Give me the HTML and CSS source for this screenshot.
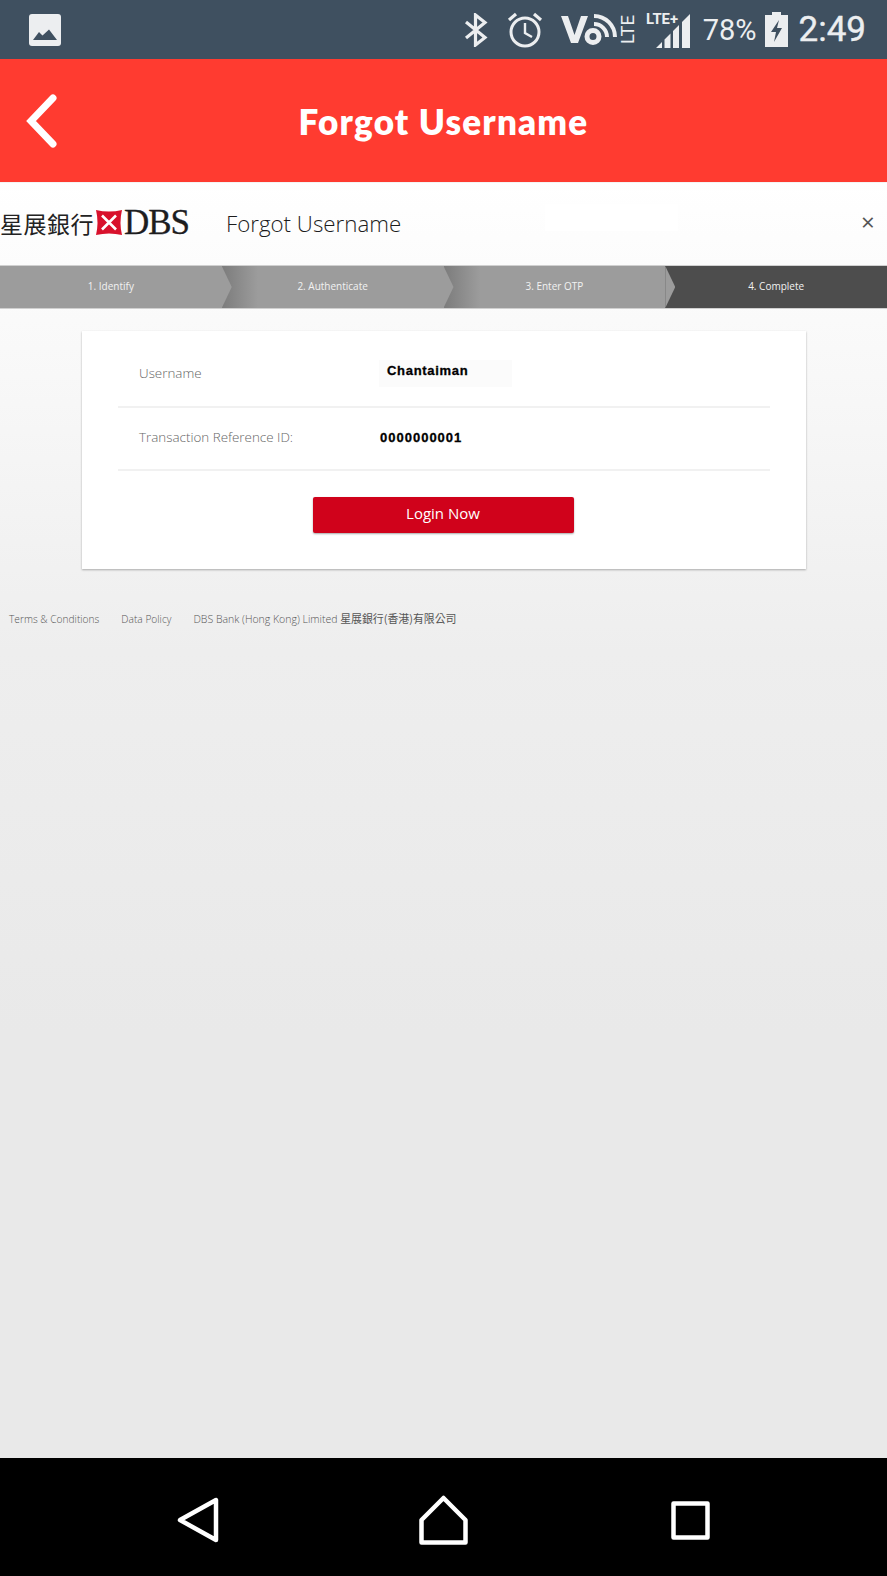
FILE: index.html
```html
<!DOCTYPE html>
<html lang="en">
<head>
    <meta charset="UTF-8">
    <meta name="viewport" content="width=device-width, initial-scale=1.0">
    <title>Forgot Username</title>
    <link rel="stylesheet" href="styles.css">
</head>
<body>

    <div class="status-bar">
        <svg class="status-photo" width="32" height="32" viewBox="0 0 32 32">
            <rect width="32" height="32" rx="3" fill="#eceef0"/>
            <path d="M4 26 L10 18 L13.5 21.5 L20 15.5 L28 26 Z" fill="#3f5060"/>
        </svg>
        <div class="status-right">
            <svg width="24" height="34" viewBox="0 0 24 34" fill="none" stroke="#eceef0" stroke-width="3.2">
                <path d="M2 9 L21 24.500 L11.500 32 L11.500 2 L21 9.500 L2 25"/>
            </svg>
            <svg class="status-alarm" width="36" height="36" viewBox="0 0 36 36" fill="none" stroke="#eceef0" stroke-width="3">
                <circle cx="18" cy="20" r="14"/>
                <path d="M18 11 L18 21 L25 25" stroke-width="2.4"/>
                <path d="M2 8 L9 2 M34 8 L27 2" stroke-width="3.2"/>
            </svg>
            <svg class="status-volte" width="80" height="40" viewBox="0 -3 80 40">
                <path d="M0 3 L7 3 L13.500 22 L20 3 L27 3 L17 30 L10 30 Z" fill="#eceef0"/>
                <circle cx="32" cy="23.500" r="6" fill="none" stroke="#eceef0" stroke-width="5"/>
                <path d="M33 11 A13 13 0 0 1 46 24 M33 3 A21 21 0 0 1 54 24" fill="none" stroke="#eceef0" stroke-width="4"/>
                <text class="status-lte-side" transform="translate(73 31) rotate(-90)" textLength="29" lengthAdjust="spacingAndGlyphs">LTE</text>
            </svg>
            <svg class="status-signal" width="46" height="44" viewBox="0 -8 46 44">
                <path d="M10 36 L16 30 L16 36 Z M18.500 36 L18.500 27.500 L24.500 21.500 L24.500 36 Z M27 36 L27 19 L33 13 L33 36 Z M36 36 L36 10 L44 2 L44 36 Z" fill="#eceef0"/>
                <text class="status-lte-top" x="0" y="12" textLength="32" lengthAdjust="spacingAndGlyphs">LTE+</text>
            </svg>
            <span class="status-pct">78%</span>
            <svg class="status-battery" width="23" height="35" viewBox="0 0 23 35">
                <path d="M7 0 H16 V3 H23 V35 H0 V3 H7 Z" fill="#eceef0"/>
                <path d="M14 8 L6 20 L11 20 L9 30 L17 16 L12 16 Z" fill="#3f5060"/>
            </svg>
            <span class="status-time">2:49</span>
        </div>
    </div>

    <div class="app-header">
        <svg width="32" height="54" viewBox="0 0 32 54" fill="none" stroke="#fff" stroke-width="7" stroke-linecap="round" stroke-linejoin="miter">
            <path d="M27 4 L5 27 L27 50"/>
        </svg>
        <h1 class="app-title">Forgot Username</h1>
    </div>

    <div class="page">
        <div class="top-row">
            <div class="logo">
                <span class="logo-cn">星展銀行</span>
                <svg class="logo-mark" width="28" height="27" viewBox="0 0 28 27">
                    <path d="M1 1 Q14 4 27 1 Q24 13.500 27 26 Q14 23 1 26 Q4 13.500 1 1 Z" fill="#d8112c"/>
                    <path d="M7 6.500 L21 20.500 M21 6.500 L7 20.500" stroke="#fff" stroke-width="2.600"/>
                </svg>
                <span class="logo-en">DBS</span>
            </div>
            <div class="top-title">Forgot Username</div>
            <div class="top-blank"></div>
            <div class="top-close">×</div>
        </div>

        <div class="steps">
            <div class="step">1. Identify</div>
            <div class="step step-shade">2. Authenticate</div>
            <div class="step step-shade">3. Enter OTP</div>
            <div class="step step-active">4. Complete</div>
        </div>

        <div class="card">
            <div class="card-row card-row-name">
                <div class="card-label">Username</div>
                <div class="card-value card-value-name">Chantaiman</div>
            </div>
            <div class="card-row card-row-ref">
                <div class="card-label">Transaction Reference ID:</div>
                <div class="card-value card-value-ref">0000000001</div>
            </div>
            <div class="card-action">
                <button class="login-button">Login Now</button>
            </div>
        </div>

        <div class="footer-links">
            <span>Terms &amp; Conditions</span>
            <span>Data Policy</span>
            <span class="footer-bank">DBS Bank (Hong Kong) Limited <span class="footer-cn">星展銀行(香港)有限公司</span></span>
        </div>
    </div>

    <div class="nav-bar">
        <svg width="42" height="46" viewBox="0 0 42 46" fill="none" stroke="#fff" stroke-width="4.500" stroke-linejoin="round">
            <path d="M3 23 L39 3 L39 43 Z"/>
        </svg>
        <svg class="nav-home" width="49" height="50" viewBox="0 0 49 50" fill="none" stroke="#fff" stroke-width="4.500" stroke-linejoin="round">
            <path d="M24.500 3 L2.500 25 L2.500 47.500 L46.500 47.500 L46.500 25 Z"/>
        </svg>
        <svg class="nav-square" width="39" height="39" viewBox="0 0 39 39" fill="none" stroke="#fff" stroke-width="4.500" stroke-linejoin="round">
            <rect x="2.500" y="2.500" width="34" height="34"/>
        </svg>
    </div>

</body>
</html>
```

FILE: styles.css
```css
* {
    box-sizing: border-box;
}

body {
    margin: 0;
    height: 1576px;
    overflow: hidden;
    display: flex;
    flex-direction: column;
    font-family: "Open Sans", Arial, sans-serif;
    background: #e9e9e9;
}

/* Status bar */
.status-bar {
    height: 59px;
    background: #3f5060;
    display: flex;
    align-items: center;
    justify-content: space-between;
    padding: 0 21px 0 29px;
    color: #eceef0;
}

.status-right {
    display: flex;
    align-items: center;
}

.status-alarm {
    margin-left: 19px;
}

.status-volte {
    margin-left: 18px;
}

.status-lte-side {
    font: 400 19px Roboto, sans-serif;
    fill: #eceef0;
}

.status-signal {
    margin-left: 5px;
    margin-bottom: 8px;
}

.status-lte-top {
    font: 700 15px Roboto, sans-serif;
    fill: #eceef0;
}

.status-pct {
    font: 400 29px Roboto, sans-serif;
    margin-left: 11px;
}

.status-battery {
    margin-left: 8px;
}

.status-time {
    font: 400 35px Roboto, sans-serif;
    -webkit-text-stroke: 0.4px #eceef0;
    margin-left: 11px;
}

/* Red header */
.app-header {
    height: 123px;
    background: #ff3b30;
    display: flex;
    align-items: center;
    padding-left: 26px;
}

.app-title {
    flex: 1;
    margin: 0 0 0 -58px;
    text-align: center;
    color: white;
    font: 800 35px Lato, sans-serif;
    letter-spacing: 1.200px;
}

/* Page */
.page {
    flex: 1;
    background: linear-gradient(#ffffff 0, #eeeeee 470px, #e9e9e9 850px);
}

.top-row {
    height: 83px;
    display: flex;
    align-items: center;
    border-top: 1px solid #f4f4f4;
}

.logo {
    width: 226px;
    display: flex;
    align-items: center;
    padding-bottom: 3px;
}

.logo-cn {
    font: 400 23px "Noto Sans CJK TC", sans-serif;
    color: #222;
    width: 95px;
    white-space: nowrap;
    letter-spacing: 0.5px;
}

.logo-en {
    font: 400 35px "Liberation Serif", serif;
    -webkit-text-stroke: 0.3px #1d1d1f;
    color: #1d1d1f;
    margin-left: 1px;
    letter-spacing: -1px;
}

.top-title {
    width: 319px;
    padding-bottom: 2px;
    font-size: 22.300px;
    font-weight: 300;
    color: #1c1c1c;
}

.top-blank {
    width: 133px;
    height: 27px;
    margin-top: -14px;
    background: white;
}

.top-close {
    margin-left: 183px;
    margin-top: -6px;
    font-size: 24px;
    color: #555;
}

.steps {
    height: 44px;
    display: flex;
    border-top: 1px solid #d0d0d0;
    border-bottom: 1px solid #d0d0d0;
}

.step {
    position: relative;
    flex: 1;
    display: flex;
    align-items: center;
    justify-content: center;
    padding-bottom: 3px;
    background: #9c9c9c;
    color: #f2f2f2;
    font-size: 10px;
}

.step::after {
    content: "";
    position: absolute;
    top: 0;
    bottom: 0;
    left: 100%;
    width: 10px;
    background: #9c9c9c;
    clip-path: polygon(0 0, 100% 50%, 0 100%);
    z-index: 1;
}

.step-shade {
    background: linear-gradient(to right, #7c7c7c 0, #9c9c9c 36px);
}

.step-active {
    background: #4d4d4d;
}

.step-active::after {
    display: none;
}

/* Card */
.card {
    width: 724px;
    height: 238px;
    margin: 22px 0 0 82px;
    padding: 0 36px;
    background: white;
    box-shadow: 0 1px 2px rgba(0, 0, 0, 0.3);
}

.card-row {
    height: 63px;
    display: flex;
    align-items: center;
    padding-left: 21px;
    border-bottom: 2px solid #f1f1f1;
}

.card-row-name {
    height: 77px;
    padding-top: 9px;
}

.card-row-ref {
    padding-bottom: 3px;
}

.card-label {
    width: 240px;
    font-size: 13.400px;
    font-weight: 300;
    color: #666;
}

.card-value {
    font: 700 13px "Liberation Sans", Arial, sans-serif;
    -webkit-text-stroke: 0.3px #000;
    color: #000;
}

.card-value-name {
    width: 133px;
    height: 27px;
    padding: 3px 0 0 8px;
    letter-spacing: 0.7px;
    background: #fbfbfb;
}

.card-value-ref {
    margin-left: 1px;
    letter-spacing: 1px;
}

.card-action {
    display: flex;
    justify-content: center;
    padding: 26px 2px 0 0;
}

.login-button {
    width: 261px;
    height: 36px;
    border: none;
    border-radius: 2px;
    background: #d0021b;
    box-shadow: 0 1px 2px rgba(0, 0, 0, 0.35);
    color: white;
    font-family: "Open Sans", Arial, sans-serif;
    font-size: 15px;
    padding-bottom: 5px;
}

/* Footer */
.footer-links {
    display: flex;
    align-items: baseline;
    gap: 22px;
    margin-top: 41px;
    padding-left: 9px;
    font-size: 10.200px;
    line-height: 14px;
    font-weight: 300;
    color: #555;
}

.footer-bank {
    font-size: 10.500px;
}

.footer-cn {
    font: 400 10.900px "Noto Sans CJK TC", sans-serif;
}

/* Nav bar */
.nav-bar {
    height: 118px;
    background: black;
    display: flex;
    align-items: center;
    padding: 6px 0 0 177px;
    gap: 200px;
}

.nav-square {
    margin-left: 3px;
    margin-top: 1px;
}
```
